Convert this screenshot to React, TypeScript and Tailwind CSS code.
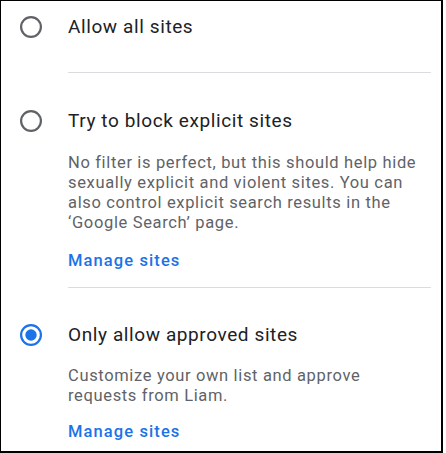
import React from "react";

function Radio({ selected }: { selected?: boolean }) {
  const color = selected ? "#1a73e8" : "#5f6368";
  return (
    <svg width="22" height="22" viewBox="0 0 22 22">
      <circle cx="11" cy="11" r="9.9" fill="none" stroke={color} strokeWidth="2.2" />
      {selected && <circle cx="11" cy="11" r="5.7" fill={color} />}
    </svg>
  );
}

export default function App() {
  return (
    <div className="w-[446px] h-[453px] bg-white" style={{ fontFamily: "Roboto, 'Noto Sans', sans-serif" }}>
      <div className="w-[443px] h-[453px] border-l border-t border-r-2 border-b-2 border-black pl-[19px] pr-[10px] pt-[12px]">
        {/* Allow all */}
        <div className="flex">
          <div className="w-[22px] h-[28px] flex items-center shrink-0">
            <Radio />
          </div>
          <div className="ml-[26px] flex-1">
            <p className="text-[19px] leading-[28px] tracking-[0.6px] text-[#202124]">Allow all sites</p>
            <div className="mt-[31px] h-px bg-[#dadce0]" />
          </div>
        </div>

        {/* Block explicit */}
        <div className="flex mt-[34px]">
          <div className="w-[22px] h-[28px] flex items-center shrink-0">
            <Radio />
          </div>
          <div className="ml-[26px] flex-1">
            <p className="text-[19px] leading-[28px] tracking-[0.6px] text-[#202124]">Try to block explicit sites</p>
            <p className="mt-[18px] text-[16.5px] leading-[20px] tracking-[0.65px] text-[#5f6368]">
              No filter is perfect, but this should help hide sexually explicit and violent sites. You can
              also control explicit search results in the ‘Google Search’ page.
            </p>
            <p className="mt-[16px] text-[16.5px] leading-[24px] tracking-[1.1px] font-medium text-[#1a73e8]">Manage sites</p>
            <div className="mt-[14px] h-px bg-[#dadce0]" />
          </div>
        </div>

        {/* Approved only */}
        <div className="flex mt-[33px]">
          <div className="w-[22px] h-[28px] flex items-center shrink-0">
            <Radio selected />
          </div>
          <div className="ml-[26px] flex-1">
            <p className="text-[19px] leading-[28px] tracking-[0.6px] text-[#202124]">Only allow approved sites</p>
            <p className="mt-[17px] text-[16.5px] leading-[20px] tracking-[0.65px] text-[#5f6368]">
              Customize your own list and approve requests from Liam.
            </p>
            <p className="mt-[14px] text-[16.5px] leading-[24px] tracking-[1.1px] font-medium text-[#1a73e8]">Manage sites</p>
          </div>
        </div>
      </div>
    </div>
  );
}
